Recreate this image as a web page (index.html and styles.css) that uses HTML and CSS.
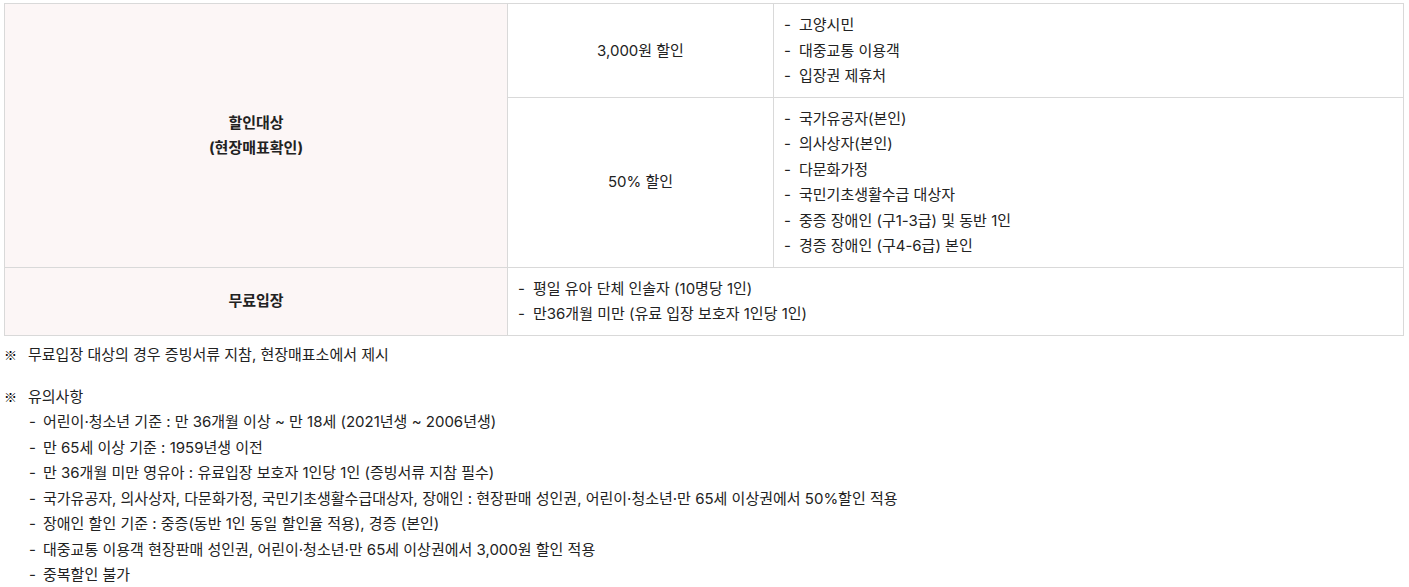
FILE: index.html
```html
<!DOCTYPE html>
<html lang="ko">
<head>
<meta charset="utf-8">
<link rel="stylesheet" href="styles.css">
</head>
<body>
<table class="price">
  <colgroup>
    <col class="c1"><col class="c2"><col class="c3">
  </colgroup>
  <tbody>
    <tr class="r1">
      <th rowspan="2">할인대상<br>(현장매표확인)</th>
      <td class="center">3,000원 할인</td>
      <td>
        <ul class="dash">
          <li>고양시민</li>
          <li>대중교통 이용객</li>
          <li>입장권 제휴처</li>
        </ul>
      </td>
    </tr>
    <tr class="r2">
      <td class="center">50% 할인</td>
      <td>
        <ul class="dash">
          <li>국가유공자(본인)</li>
          <li>의사상자(본인)</li>
          <li>다문화가정</li>
          <li>국민기초생활수급 대상자</li>
          <li>중증 장애인 (구1-3급) 및 동반 1인</li>
          <li>경증 장애인 (구4-6급) 본인</li>
        </ul>
      </td>
    </tr>
    <tr class="r3">
      <th>무료입장</th>
      <td colspan="2">
        <ul class="dash">
          <li>평일 유아 단체 인솔자 (10명당 1인)</li>
          <li>만36개월 미만 (유료 입장 보호자 1인당 1인)</li>
        </ul>
      </td>
    </tr>
  </tbody>
</table>

<div class="notes">
  <p class="note"><span class="mark">※</span><span>무료입장 대상의 경우 증빙서류 지참, 현장매표소에서 제시</span></p>
  <div class="note-block">
    <p class="note"><span class="mark">※</span><span>유의사항</span></p>
    <ul class="dash sub">
      <li>어린이·청소년 기준 : 만 36개월 이상 ~ 만 18세 (2021년생 ~ 2006년생)</li>
      <li>만 65세 이상 기준 : 1959년생 이전</li>
      <li>만 36개월 미만 영유아 : 유료입장 보호자 1인당 1인 (증빙서류 지참 필수)</li>
      <li>국가유공자, 의사상자, 다문화가정, 국민기초생활수급대상자, 장애인 : 현장판매 성인권, 어린이·청소년·만 65세 이상권에서 50%할인 적용</li>
      <li>장애인 할인 기준 : 중증(동반 1인 동일 할인율 적용), 경증 (본인)</li>
      <li>대중교통 이용객 현장판매 성인권, 어린이·청소년·만 65세 이상권에서 3,000원 할인 적용</li>
      <li>중복할인 불가</li>
    </ul>
  </div>
</div>
</body>
</html>
```
FILE: styles.css
```css
html, body {
  margin: 0;
  background: #ffffff;
}
body {
  padding: 3px 6px 0 4px;
  font-family: Inter, "Noto Sans CJK KR", "Noto Sans", sans-serif;
  font-size: 15px;
  line-height: 25.5px;
  color: #222222;
}
.price {
  width: 1400px;
  border-collapse: collapse;
  table-layout: fixed;
}
.c1 { width: 503px; }
.c2 { width: 266px; }
.c3 { width: auto; }
.price th,
.price td {
  border: 1px solid #d9d9d9;
  padding: 8px 10px;
  vertical-align: middle;
}
.price th {
  background: #fcf6f6;
  font-weight: 700;
  text-align: center;
}
.price td.center {
  text-align: center;
}
.dash {
  list-style: none;
  margin: 0;
  padding: 0;
}
.dash li {
  display: flex;
}
.dash li::before {
  content: "-";
  flex: 0 0 15px;
}
.notes {
  margin-top: 6px;
}
.note {
  margin: 0;
  display: flex;
}
.note .mark {
  flex: 0 0 24px;
  font-family: "Noto Sans CJK KR", sans-serif;
  font-size: 13px;
  font-weight: 900;
  color: #000000;
  padding-left: 0;
}
.note-block {
  margin-top: 16.5px;
}
.sub {
  padding-left: 25px;
}
.sub li::before {
  flex-basis: 14px;
}
```
